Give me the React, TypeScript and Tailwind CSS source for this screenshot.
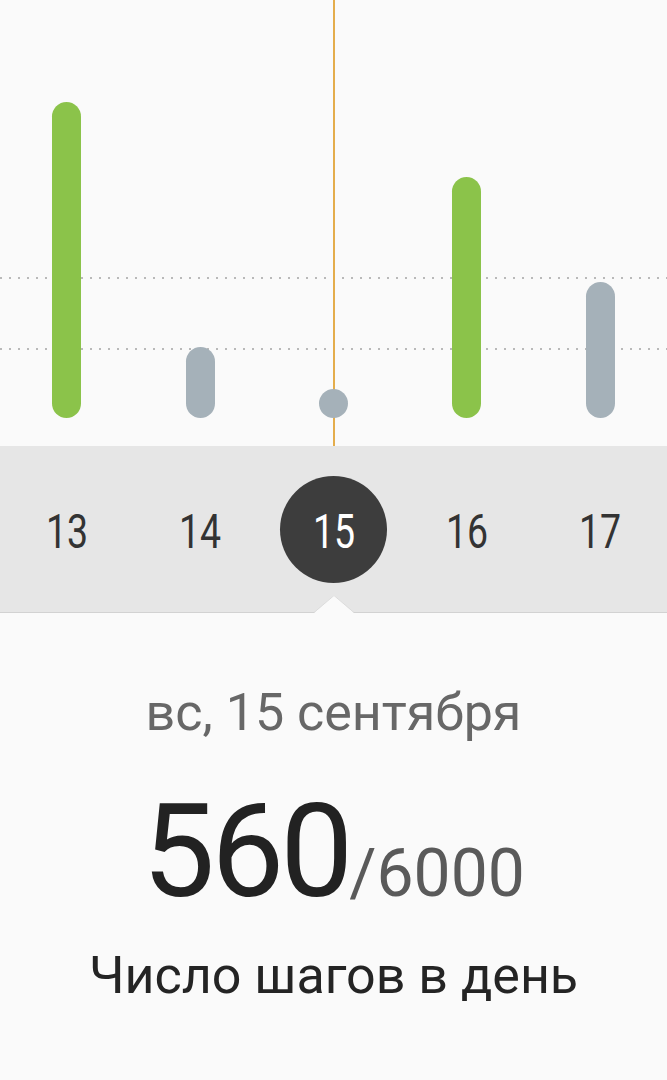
import React from "react";

const bars = [
  { day: 13, height: 316, color: "bg-[#8bc34a]" },
  { day: 14, height: 71, color: "bg-[#a5b1b9]" },
  { day: 15, height: 29, color: "bg-[#a5b1b9]" },
  { day: 16, height: 241, color: "bg-[#8bc34a]" },
  { day: 17, height: 136, color: "bg-[#a5b1b9]" },
];

const selectedDay = 15;

function DottedLine({ top }: { top: number }) {
  return (
    <div
      className="absolute left-0 right-0 h-[2px] bg-[repeating-linear-gradient(90deg,#b9b9b9_0_2px,transparent_2px_9px)]"
      style={{ top }}
    />
  );
}

export default function App() {
  return (
    <div className="w-[667px] h-[1080px] overflow-hidden bg-[#fafafa] flex flex-col font-['Roboto','Noto_Sans',sans-serif]">
      {/* Chart */}
      <div className="relative h-[446px] shrink-0">
        <DottedLine top={277} />
        <DottedLine top={348} />
        <div className="absolute top-0 bottom-0 left-1/2 -translate-x-1/2 w-[2px] bg-[#e4ad4c]" />
        <div className="relative grid grid-cols-5 h-full items-end pb-[28px]">
          {bars.map((b) => (
            <div key={b.day} className="flex justify-center">
              <div className={`w-[29px] rounded-full ${b.color}`} style={{ height: b.height }} />
            </div>
          ))}
        </div>
      </div>

      {/* Day strip */}
      <div className="relative h-[167px] shrink-0 bg-[#e6e6e6] border-b border-[#d2d2d2]">
        <div className="grid grid-cols-5 h-full items-center">
          {bars.map((b) => {
            const active = b.day === selectedDay;
            return (
              <div key={b.day} className="flex justify-center">
                <div
                  className={
                    active
                      ? "w-[107px] h-[107px] rounded-full bg-[#3d3d3d] flex items-center justify-center text-white"
                      : "w-[107px] h-[107px] flex items-center justify-center text-[#333333]"
                  }
                >
                  <span className="inline-block translate-y-[3px] scale-x-[0.78] text-[48px] leading-none font-normal">
                    {b.day}
                  </span>
                </div>
              </div>
            );
          })}
        </div>
        <svg
          className="absolute left-1/2 -translate-x-1/2 bottom-[-1px]"
          width="40"
          height="18"
          viewBox="0 0 40 18"
        >
          <polygon points="0,18 20,0 40,18" fill="#fafafa" />
          <polyline points="0,17.5 20,0.5 40,17.5" fill="none" stroke="#dcdcdc" strokeWidth="1" />
        </svg>
      </div>

      {/* Details */}
      <div className="flex flex-col items-center">
        <p className="mt-[74px] text-[52px] leading-none text-[#676767]">вс, 15 сентября</p>
        <p className="mt-[48px] leading-none whitespace-nowrap">
          <span className="text-[130px] tracking-[-4px] text-[#222222]">560</span>
          <span className="text-[66px] text-[#5a5a5a]">/6000</span>
        </p>
        <p className="mt-[33px] text-[52px] leading-none text-[#242424]">Число шагов в день</p>
      </div>
    </div>
  );
}
